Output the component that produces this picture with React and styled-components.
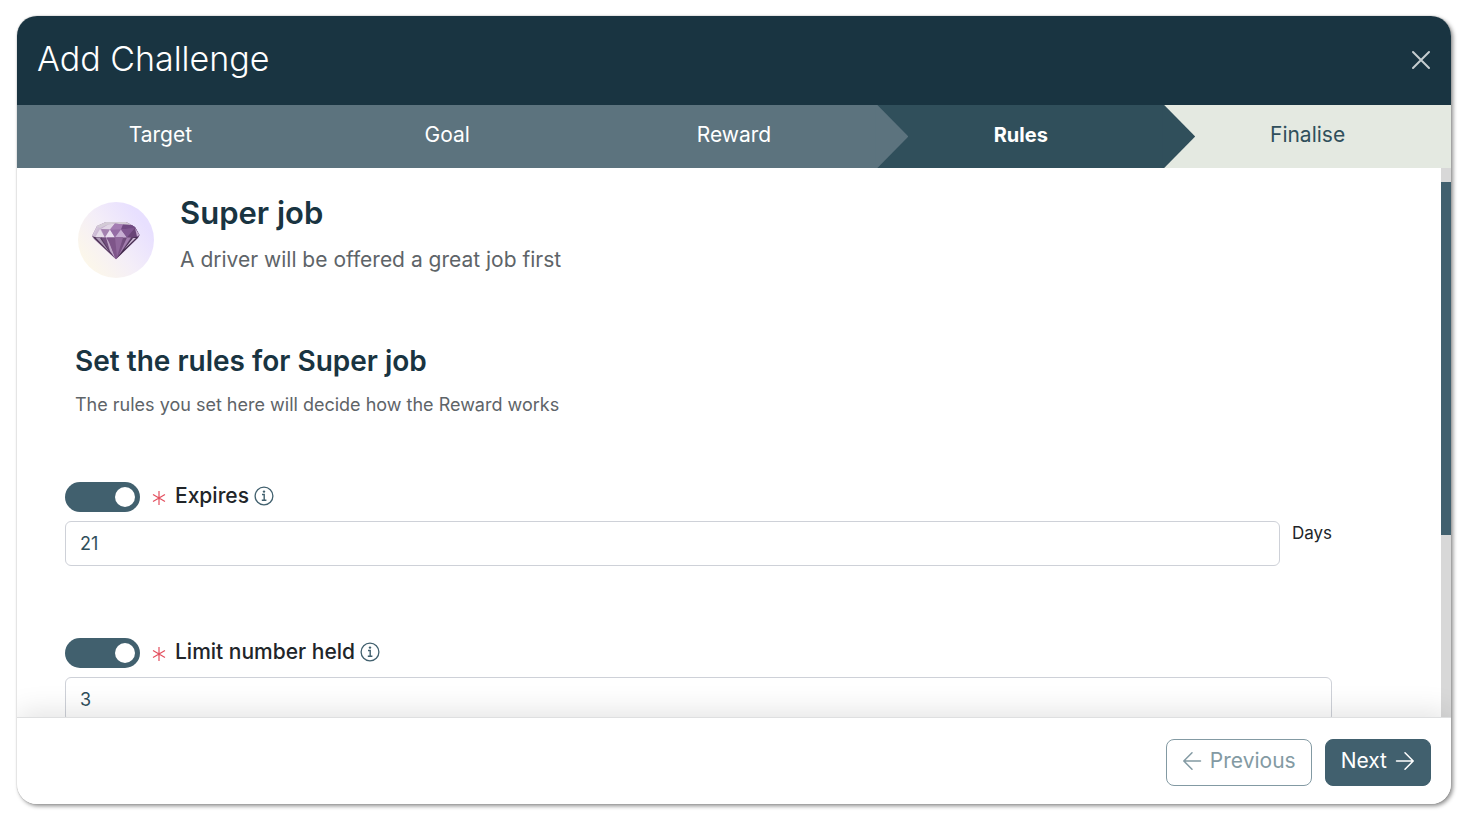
import React, { useState } from "react";
import styled, { createGlobalStyle } from "styled-components";

const GlobalStyle = createGlobalStyle`
  * { box-sizing: border-box; }
  body {
    margin: 0;
    background: #fff;
    font-family: Inter, "Liberation Sans", sans-serif;
    color: #212529;
  }
  button, input { font-family: inherit; }
`;

const Page = styled.div`
  height: 100vh;
  padding: 16px 18px 21px 17px;
`;

const Modal = styled.div`
  height: 100%;
  display: flex;
  flex-direction: column;
  overflow: hidden;
  border-radius: 20px;
  background: #fff;
  box-shadow: 0 0 1px #777, 2px 2px 4px rgba(0, 0, 0, 0.45);
`;

const Header = styled.header`
  flex: none;
  height: 89px;
  padding: 0 20px 2px;
  display: flex;
  align-items: center;
  justify-content: space-between;
  background: #193441;
`;

const Title = styled.h1`
  margin: 0;
  padding-bottom: 2px;
  font-size: 34px;
  line-height: 44px;
  font-weight: 300;
  color: #fff;
`;

const CloseButton = styled.button`
  display: flex;
  padding: 0;
  border: 0;
  background: none;
  color: #c5cdd0;
  cursor: pointer;
`;

const Steps = styled.ol`
  flex: none;
  display: flex;
  margin: 0;
  padding: 0;
  list-style: none;
`;

const stepColors = {
  done: "#5c737e",
  current: "#304f5b",
  todo: "#e4e9e1",
};

const Step = styled.li`
  position: relative;
  flex: 1;
  height: 63px;
  padding-bottom: 4px;
  display: flex;
  align-items: center;
  justify-content: center;
  font-size: ${(p) => (p.$state === "current" ? 20 : 21)}px;
  line-height: 24px;
  font-weight: ${(p) => (p.$state === "current" ? 700 : 400)};
  color: ${(p) => (p.$state === "todo" ? "#304f5b" : "#fff")};
  background: ${(p) => stepColors[p.$state]};

  &::after {
    content: "";
    display: ${(p) => (p.$arrow ? "block" : "none")};
    position: absolute;
    z-index: 1;
    top: 0;
    left: calc(100% - 2px);
    width: 33px;
    height: 100%;
    background: inherit;
    clip-path: polygon(0 0, 2px 0, 100% 50%, 2px 100%, 0 100%);
  }
`;

const Body = styled.div`
  flex: 1;
  min-height: 0;
  display: flex;
`;

const Content = styled.main`
  position: relative;
  flex: 1;
  min-width: 0;
  padding: 25px 109px 0 48px;
  overflow-y: auto;
  scrollbar-width: none;
`;

const Rail = styled.div`
  flex: none;
  width: 10px;
  padding-top: 14px;
  background: #d8d8d8;
`;

const Thumb = styled.div`
  height: 66%;
  background: #41606e;
`;

const Reward = styled.section`
  display: flex;
  gap: 26px;
  padding-left: 13px;
`;

const Badge = styled.svg`
  flex: none;
  width: 76px;
  height: 76px;
  margin-top: 9px;
`;

const RewardName = styled.h2`
  margin: 0;
  font-size: 31px;
  line-height: 40px;
  font-weight: 600;
  color: #193441;
`;

const RewardText = styled.p`
  margin: 15px 0 0;
  font-size: 21px;
  line-height: 24px;
  color: #5e6468;
`;

const Intro = styled.section`
  padding: 65px 0 0 10px;
`;

const IntroTitle = styled.h2`
  margin: 0;
  font-size: 28px;
  line-height: 36px;
  font-weight: 600;
  color: #193441;
`;

const IntroText = styled.p`
  margin: 14px 0 0;
  font-size: 18px;
  line-height: 24px;
  color: #5e6468;
`;

const Rule = styled.section`
  margin-top: ${(p) => (p.$first ? 64 : 71)}px;

  &:last-child {
    padding-bottom: 72px;
  }
`;

const RuleHead = styled.div`
  display: flex;
  align-items: center;
  height: 32px;
`;

const Switch = styled.input`
  appearance: none;
  width: 75px;
  height: 30px;
  margin: 0 12px 0 0;
  padding: 5px;
  display: flex;
  justify-content: ${(p) => (p.checked ? "flex-end" : "flex-start")};
  border-radius: 15px;
  background: ${(p) => (p.checked ? "#41606e" : "#bcc7cc")};
  cursor: pointer;

  &::before {
    content: "";
    width: 20px;
    height: 20px;
    border-radius: 50%;
    background: #fff;
  }
`;

const RuleLabel = styled.label`
  margin: 0 5px 2px 9px;
  font-size: 21px;
  line-height: 24px;
  font-weight: 500;
`;

const InfoButton = styled.button`
  display: flex;
  margin: 0 0 2px;
  padding: 0;
  border: 0;
  background: none;
  color: #41606e;
`;

const FieldRow = styled.div`
  display: flex;
  gap: 12px;
  margin-top: 8px;
`;

const Field = styled.input`
  flex: 1;
  min-width: 0;
  height: 45px;
  padding: 0 14px;
  border: 1px solid #ced1d8;
  border-radius: 6px;
  background: #fff;
  font-size: 18px;
  color: #304f5b;
`;

const Unit = styled.span`
  font-size: 17px;
  line-height: 24px;
`;

const Footer = styled.footer`
  position: relative;
  flex: none;
  display: flex;
  justify-content: flex-end;
  gap: 13px;
  padding: 21px 20px 18px;
  border-top: 1px solid #dedfe0;
  background: #fff;
  box-shadow: 0 -4px 28px rgba(0, 0, 0, 0.12);
`;

const FooterButton = styled.button`
  display: flex;
  align-items: center;
  justify-content: center;
  gap: 8px;
  height: 47px;
  padding: 0 15px 4px;
  border: 1px solid ${(p) => (p.$primary ? "#41606e" : "#839aa3")};
  border-radius: 8px;
  font-size: 21px;
  line-height: 24px;
  color: ${(p) => (p.$primary ? "#fff" : "#839aa3")};
  background: ${(p) => (p.$primary ? "#41606e" : "#fff")};
`;

const Diamond = () => (
  <Badge viewBox="0 0 76 76" role="img" aria-label="Diamond">
    <defs>
      <linearGradient id="badge" x1="0.1" y1="0.8" x2="0.85" y2="0.25">
        <stop offset="0" stopColor="#fcf7ea" />
        <stop offset="0.5" stopColor="#f4eef8" />
        <stop offset="1" stopColor="#e8e0ff" />
      </linearGradient>
      <linearGradient id="crown" x1="0" y1="0" x2="1" y2="0.2">
        <stop offset="0" stopColor="#e9e3ec" />
        <stop offset="0.45" stopColor="#b193bd" />
        <stop offset="1" stopColor="#6a447c" />
      </linearGradient>
      <linearGradient id="pavilion" x1="0" y1="0" x2="1" y2="0">
        <stop offset="0" stopColor="#8a6b95" />
        <stop offset="0.5" stopColor="#80578c" />
        <stop offset="1" stopColor="#51345d" />
      </linearGradient>
    </defs>
    <circle cx="38" cy="38" r="38" fill="url(#badge)" />
    <path d="M14 34 19 24 28 20 48 20 57 25 61.5 33 60 36 38 57.3 16 37Z" fill="url(#pavilion)" />
    <path d="M14 34 19 24 28 20 48 20 57 25 61.5 33 60 35 14.5 35.5Z" fill="url(#crown)" />
    <path d="M19 24 28 20 48 20 54 23 45 22.5 37 21.5 30 22.5 22 26Z" fill="#d3cbd6" />
    <path d="M30 22.5 37 21.5 32 27.5 23 27Z" fill="#e0d5e5" />
    <path d="M37 21.5 45 22.5 43 27.5 32 27.5Z" fill="#a47db3" />
    <path d="M45 22.5 54 23 57 26 43 27.5Z" fill="#714a83" />
    <path d="M22 27 27 35.5 17 35.5Z" fill="#e5dce9" />
    <path d="M23 27 32 27.5 27 35.5Z" fill="#a381af" />
    <path d="M32 27.5 37 35.5 27 35.5Z" fill="#eadff0" />
    <path d="M32 27.5 43 27.5 37 35.5Z" fill="#956ca5" />
    <path d="M43 27.5 49 35.5 37 35.5Z" fill="#c7aed3" />
    <path d="M43 27.5 57 26 49 35.5Z" fill="#805791" />
    <path d="M57 26 59 34.5 49 35.5Z" fill="#694477" />
    <path d="M57 26 61.5 33 59 34.5Z" fill="#c4abcf" />
    <path d="M14 34 18 35.5 38 57.3Z" fill="#49304f" />
    <path d="M17 35.5 24 35.5 36 55Z" fill="#563a60" />
    <path d="M18 36 22 36 31 49.5Z" fill="#ac96b5" />
    <path d="M23 35.5 28 35.5 33 51Z" fill="#714e7d" />
    <path d="M28 35.5 32 41 37 56 32 49Z" fill="#bfa7c8" />
    <path d="M29 35.5 45 35.5 38 57.3Z" fill="#7e5589" />
    <path d="M37 35.5 45 35.5 39 55Z" fill="#8f679b" />
    <path d="M49 35.5 53 35.5 41 53Z" fill="#a17dad" />
    <path d="M54 36 60 35 38 57.3Z" fill="#412b4b" />
    <path d="M55 36 58 36 46 47.5Z" fill="#cab4d2" />
  </Badge>
);

const CloseIcon = () => (
  <svg width="20" height="20" viewBox="0 0 20 20" fill="none" stroke="currentColor" strokeWidth="2" strokeLinecap="round">
    <path d="M2 2 18 18M18 2 2 18" />
  </svg>
);

const Asterisk = () => (
  <svg width="14" height="16" viewBox="0 0 14 16" fill="none" stroke="#e3505f" strokeWidth="1.2" aria-hidden="true">
    <path d="M7 2V16M1 5.5 13 12.5M13 5.5 1 12.5" />
  </svg>
);

const InfoIcon = () => (
  <svg width="20" height="20" viewBox="0 0 20 20" fill="none" stroke="currentColor">
    <circle cx="10" cy="10" r="8.9" strokeWidth="1.3" />
    <path d="M8 8.5H10.2V14M7.8 14.2H12.4" strokeWidth="1.4" />
    <circle cx="10" cy="5.6" r="1.2" fill="currentColor" stroke="none" />
  </svg>
);

const Arrow = ({ back }) => (
  <svg width="20" height="20" viewBox="0 0 20 20" fill="none" stroke="currentColor" strokeWidth="1.5" strokeLinecap="round" strokeLinejoin="round">
    <path d={back ? "M18.5 10H2M10 1.8 1.8 10 10 18.2" : "M1.5 10H18M10 1.8 18.2 10 10 18.2"} />
  </svg>
);

const steps = [
  { name: "Target", state: "done" },
  { name: "Goal", state: "done" },
  { name: "Reward", state: "done", arrow: true },
  { name: "Rules", state: "current", arrow: true },
  { name: "Finalise", state: "todo" },
];

function RuleField({ id, label, initial, unit, first }) {
  const [on, setOn] = useState(true);
  const [value, setValue] = useState(initial);
  return (
    <Rule $first={first}>
      <RuleHead>
        <Switch type="checkbox" aria-label={`Enable ${label}`} checked={on} onChange={(e) => setOn(e.target.checked)} />
        <Asterisk />
        <RuleLabel htmlFor={id}>{label}</RuleLabel>
        <InfoButton type="button" aria-label={`About ${label}`}>
          <InfoIcon />
        </InfoButton>
      </RuleHead>
      <FieldRow>
        <Field id={id} value={value} onChange={(e) => setValue(e.target.value)} />
        {unit && <Unit>{unit}</Unit>}
      </FieldRow>
    </Rule>
  );
}

export default function App() {
  return (
    <Page>
      <GlobalStyle />
      <Modal role="dialog" aria-labelledby="dialog-title">
        <Header>
          <Title id="dialog-title">Add Challenge</Title>
          <CloseButton type="button" aria-label="Close">
            <CloseIcon />
          </CloseButton>
        </Header>
        <Steps>
          {steps.map((s) => (
            <Step key={s.name} $state={s.state} $arrow={s.arrow}>
              {s.name}
            </Step>
          ))}
        </Steps>
        <Body>
          <Content>
            <Reward>
              <Diamond />
              <div>
                <RewardName>Super job</RewardName>
                <RewardText>A driver will be offered a great job first</RewardText>
              </div>
            </Reward>
            <Intro>
              <IntroTitle>Set the rules for Super job</IntroTitle>
              <IntroText>The rules you set here will decide how the Reward works</IntroText>
            </Intro>
            <RuleField id="expires" label="Expires" initial="21" unit="Days" first />
            <RuleField id="limit" label="Limit number held" initial="3" />
          </Content>
          <Rail>
            <Thumb />
          </Rail>
        </Body>
        <Footer>
          <FooterButton type="button">
            <Arrow back />
            Previous
          </FooterButton>
          <FooterButton type="button" $primary>
            Next
            <Arrow />
          </FooterButton>
        </Footer>
      </Modal>
    </Page>
  );
}
